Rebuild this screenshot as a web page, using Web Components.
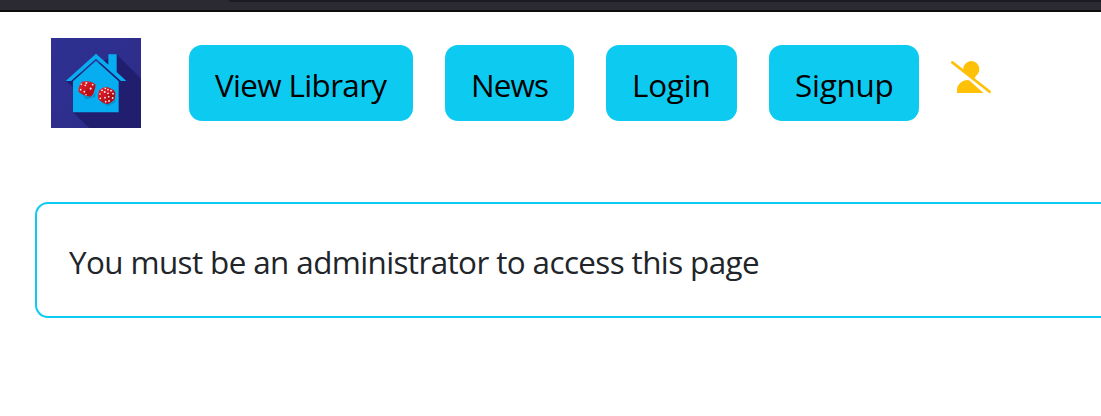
<!DOCTYPE html>
<html lang="en">
<head>
<meta charset="utf-8">
<title>Game Library</title>
<style>
  body { margin: 0; background: #fff; overflow: hidden; font-family: "Open Sans", "Noto Sans", sans-serif; color: #212529; }
</style>
</head>
<body>
<app-shell></app-shell>
<script>
const define = (name, html) => {
  const template = document.createElement('template');
  template.innerHTML = html;
  customElements.define(name, class extends HTMLElement {
    constructor() {
      super();
      this.attachShadow({ mode: 'open' }).appendChild(template.content.cloneNode(true));
    }
  });
};

define('window-edge', `
<style>
  :host { display: block; height: 12px; box-sizing: border-box; background: #2b2a33; border-bottom: 2px solid #0c0c0d; }
  div { height: 2px; margin-left: 229px; background: #1c1b22; border-bottom-left-radius: 3px; }
</style><div></div>`);

define('site-logo', `
<style>:host { display: block; width: 90px; height: 90px; } svg { display: block; }</style>
<svg width="90" height="90" viewBox="18 18 270 270">
  <defs>
    <linearGradient id="bg" x2="1" y2="1"><stop stop-color="#2e3192"/><stop offset="1" stop-color="#2d2b87"/></linearGradient>
    <linearGradient id="red" x2="1" y2="1"><stop stop-color="#e8222a"/><stop offset="1" stop-color="#aa0714"/></linearGradient>
  </defs>
  <path fill="url(#bg)" d="M18 18h270v270H18z"/>
  <path fill="#211e70" d="M215 67L288 140V288H133L84 241V166L63 147Z"/>
  <path fill="#06aef1" d="M62 147L153 65L190 98V67H215V120L244 147H228L153 80L78 147Z"/>
  <path fill="#06aef1" d="M84 148L153 86L221 148V241H84Z"/>
  <g fill="#087bb5" opacity=".6"><path d="M103 178L118 192L140 196L153 181L150 195L123 202Z"/><path d="M161 203L185 217L213 203L209 212L187 223Z"/></g>
  <path fill="url(#red)" d="M111 149Q127 145 144 152Q152 155 152 161L146 182Q143 191 136 194L121 191Q104 183 101 179Q99 172 105 157Z"/>
  <path fill="#b80c18" d="M126 173L150 160L144 187L136 193L121 190Z"/>
  <path fill="url(#red)" d="M183 164Q194 166 207 175Q212 180 211 188L209 202Q203 210 187 217Q175 215 162 204Q158 197 159 188L163 174Q173 167 183 164Z"/>
  <path fill="#b10b17" d="M186 188L210 180L209 202L187 215Z"/>
  <g fill="#fff" opacity=".93">
    <circle cx="124" cy="153" r="3"/><circle cx="109" cy="157" r="2.4"/><circle cx="121" cy="160" r="2.6"/><circle cx="143" cy="158" r="2.6"/>
    <circle cx="107" cy="173" r="2.6"/><circle cx="118" cy="179" r="2.6"/><circle cx="137" cy="170" r="3.2"/><circle cx="123" cy="188" r="2.3"/>
    <circle cx="181" cy="169" r="2.6"/><circle cx="171" cy="175" r="2.8"/><circle cx="189" cy="173" r="2.5"/><circle cx="179" cy="180" r="3"/><circle cx="198" cy="176" r="2.6"/><circle cx="189" cy="184" r="2.7"/>
    <circle cx="165" cy="186" r="2.4"/><circle cx="166" cy="199" r="2.6"/><circle cx="180" cy="197" r="2.6"/><circle cx="182" cy="209" r="2.6"/><circle cx="191" cy="194" r="2.7"/><circle cx="204" cy="185" r="2.7"/><circle cx="203" cy="198" r="2.7"/><circle cx="192" cy="207" r="2.7"/>
  </g>
</svg>`);

define('nav-button', `
<style>
  :host { display: block; box-sizing: border-box; height: 76px; padding: 14px 0 0 26px; border-radius: 13px; background: #0dcaf0; color: #000; font-size: 31.4px; line-height: 52px; white-space: nowrap; }
</style><slot></slot>`);

define('guest-icon', `
<style>:host { display: block; width: 42px; height: 36px; } svg { display: block; }</style>
<svg width="42" height="36" viewBox="950 59 42 36" fill="#ffc107">
  <path d="M963.4 71.2A8.1 8.1 0 1 1 976 75.8L974 79.4Z"/>
  <path d="M957 93V90C957 84.5 962 80 968 80C968.5 80 969 80.2 969.4 80.6L983.6 93Z"/>
  <path fill="none" stroke="#ffc107" stroke-width="2.7" stroke-linecap="round" d="M952.3 62.4L989.7 91.7"/>
</svg>`);

define('site-nav', `
<style>
  :host { display: flex; align-items: flex-start; padding: 26px 0 0 51px; }
  .items { display: flex; gap: 32px; margin: 7px 0 0 48px; }
  .library { width: 224px; letter-spacing: -.64px; }
  .news { width: 129px; letter-spacing: -.85px; }
  .login { width: 131px; letter-spacing: -.2px; }
  .signup { width: 150px; letter-spacing: -.25px; }
  guest-icon { margin: 14px 0 0 -1px; }
</style>
<site-logo></site-logo>
<div class="items">
  <nav-button class="library">View Library</nav-button>
  <nav-button class="news">News</nav-button>
  <nav-button class="login">Login</nav-button>
  <nav-button class="signup">Signup</nav-button>
  <guest-icon></guest-icon>
</div>`);

define('alert-card', `
<style>
  :host { display: block; box-sizing: border-box; height: 116px; margin: 74px 0 0 35px; padding: 33px 0 0 32px; border: 2px solid #0dcaf0; border-right: 0; border-radius: 13px 0 0 13px; font-size: 31.4px; line-height: 50px; letter-spacing: -.6px; white-space: nowrap; }
</style><slot></slot>`);

define('app-shell', `
<style>:host { display: block; height: 416px; }</style>
<window-edge></window-edge>
<site-nav></site-nav>
<alert-card>You must be an administrator to access this page</alert-card>`);
</script>
</body>
</html>
